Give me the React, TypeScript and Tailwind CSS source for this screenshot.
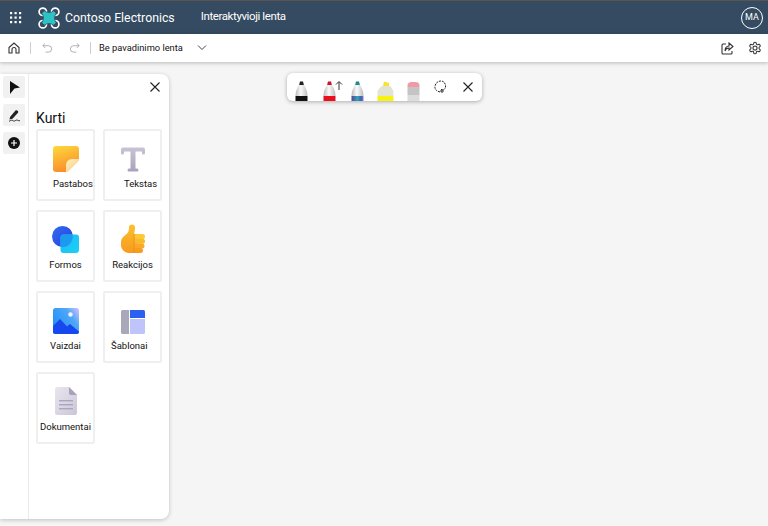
import React from "react";

const font = { fontFamily: 'Roboto, "Noto Sans", sans-serif' };

function NoteIcon() {
  return (
    <svg width="26" height="26" viewBox="0 0 26 26">
      <defs>
        <linearGradient id="n1" x1="0.2" y1="0" x2="0.5" y2="1">
          <stop offset="0" stopColor="#fed53a" />
          <stop offset="1" stopColor="#f98b2c" />
        </linearGradient>
        <linearGradient id="n2" x1="0" y1="0" x2="1" y2="1">
          <stop offset="0" stopColor="#fff0c4" />
          <stop offset="1" stopColor="#fbc978" />
        </linearGradient>
      </defs>
      <path d="M3 0h20a3 3 0 0 1 3 3v11L14 26H3a3 3 0 0 1-3-3V3a3 3 0 0 1 3-3z" fill="url(#n1)" />
      <path d="M26 13v1.500L14.500 26H13v-7a6 6 0 0 1 6-6z" fill="url(#n2)" />
    </svg>
  );
}
function TextIcon() {
  return (
    <svg width="24" height="25" viewBox="0 0 24 25">
      <defs>
        <linearGradient id="t1" x1="0" y1="0" x2="0" y2="1">
          <stop offset="0" stopColor="#c9c3d6" />
          <stop offset="1" stopColor="#a9a1bb" />
        </linearGradient>
      </defs>
      <path d="M0 6V2.500Q0 .5 2 .5h20q2 0 2 2V6q0 1.500-1.500 1.500T21 6V4.500h-6.500V21.500H16q1.500 0 1.500 1.500T16 24.500H8q-1.500 0-1.500-1.500T8 21.500h1.500V4.500H3V6q0 1.500-1.500 1.500T0 6z" fill="url(#t1)" />
    </svg>
  );
}
function ShapesIcon() {
  return (
    <svg width="27" height="27" viewBox="0 0 27 27">
      <defs>
        <linearGradient id="s1" x1="0" y1="0" x2="1" y2="1">
          <stop offset="0" stopColor="#2f6bf0" />
          <stop offset="1" stopColor="#2a3fe0" />
        </linearGradient>
        <linearGradient id="s2" x1="0" y1="0" x2="1" y2="1">
          <stop offset="0" stopColor="#22b8f5" />
          <stop offset="1" stopColor="#18d2f5" />
        </linearGradient>
      </defs>
      <circle cx="10.500" cy="10.500" r="10.500" fill="url(#s1)" />
      <rect x="8.500" y="8.500" width="18.500" height="18.500" rx="3" fill="url(#s2)" />
      <path d="M8.500 11.500a3 3 0 0 1 3-3H20.500A10.500 10.500 0 0 1 11 21a10 10 0 0 1-2.500-.3z" fill="#1b9af0" />
    </svg>
  );
}
function ThumbIcon() {
  return (
    <svg width="24" height="29" viewBox="0 0 24 29">
      <defs>
        <linearGradient id="h1" x1="0" y1="0" x2="0" y2="1">
          <stop offset="0" stopColor="#fcc02e" />
          <stop offset="1" stopColor="#f79a1f" />
        </linearGradient>
      </defs>
      <path d="M0 18.500c0-4 2.500-6 5-8 2.500-2 3-3.500 3-7.500 0-3.500 6-3.500 6 0 0 3-.5 5-1 7h3v19H8c-4.500 0-8-4-8-8z" fill="url(#h1)" />
      <rect x="13" y="10" width="11" height="5" rx="2.500" fill="#fdc834" />
      <rect x="13" y="14.700" width="11" height="5" rx="2.500" fill="#fbb92c" />
      <rect x="13" y="19.400" width="10.500" height="5" rx="2.500" fill="#f9a926" />
      <rect x="13" y="24" width="9" height="5" rx="2.500" fill="#f89c20" />
      <path d="M13 10v19" stroke="#ee8a1a" strokeWidth=".8" />
    </svg>
  );
}
function ImageIcon() {
  return (
    <svg width="26" height="26" viewBox="0 0 26 26">
      <defs>
        <linearGradient id="i1" x1="0" y1="0.700" x2="1" y2="0">
          <stop offset="0" stopColor="#1f8ff5" />
          <stop offset="0.650" stopColor="#4fa8f8" />
          <stop offset="1" stopColor="#d8c2fb" />
        </linearGradient>
      </defs>
      <rect width="26" height="26" rx="2.500" fill="url(#i1)" />
      <circle cx="17.500" cy="6.500" r="2.200" fill="#f4f1ff" />
      <path d="M0 18l7-7 7 7.500 3-2.500 9 7.500V23.500A2.500 2.500 0 0 1 23.500 26h-21A2.500 2.500 0 0 1 0 23.500z" fill="#1747ef" />
    </svg>
  );
}
function TemplateIcon() {
  return (
    <svg width="24" height="24" viewBox="0 0 24 24">
      <path d="M1.500 0H8v24H1.500A1.500 1.500 0 0 1 0 22.500v-21A1.500 1.500 0 0 1 1.500 0z" fill="#a9a8bb" />
      <path d="M9 0h13.500A1.500 1.500 0 0 1 24 1.500V8H9z" fill="#2d5ff0" />
      <path d="M9 9h15v13.500a1.500 1.500 0 0 1-1.500 1.500H9z" fill="#bfc5fb" />
    </svg>
  );
}
function DocIcon() {
  return (
    <svg width="22" height="28" viewBox="0 0 22 28">
      <defs>
        <linearGradient id="d1" x1="0" y1="0" x2="1" y2="1">
          <stop offset="0" stopColor="#e9e6ee" />
          <stop offset="1" stopColor="#cbc6d8" />
        </linearGradient>
      </defs>
      <path d="M2 0h12l8 8v18a2 2 0 0 1-2 2H2a2 2 0 0 1-2-2V2a2 2 0 0 1 2-2z" fill="url(#d1)" />
      <path d="M14 0l8 8h-6a2 2 0 0 1-2-2z" fill="#a5a2ba" />
      <rect x="4" y="13" width="14" height="1.400" fill="#a9a7bd" />
      <rect x="4" y="17" width="14" height="1.400" fill="#a9a7bd" />
      <rect x="4" y="21" width="14" height="1.400" fill="#a9a7bd" />
    </svg>
  );
}

function Card({ label, icon, labelClass }: { label: string; icon: React.ReactNode; labelClass?: string }) {
  return (
    <div className="relative flex h-[72px] w-[59px] flex-col items-center rounded-[2px] border-2 border-[#efefef] bg-white">
      <div className="flex h-[41px] w-full items-end justify-center">{icon}</div>
      <div className={"absolute top-[45px] whitespace-nowrap text-[9.500px] leading-[16px] text-[#111] " + (labelClass ?? "")}>{label}</div>
    </div>
  );
}

function Marker({ tip, body, band, id, className }: { tip: string; body: string; band: React.ReactNode; id: string; className?: string }) {
  return (
    <svg width="13" height="20" viewBox="0 0 13 20" className={className}>
      <defs>
        <linearGradient id={id} x1="0" y1="0" x2="1" y2="0">
          <stop offset="0" stopColor="#bdbdbd" />
          <stop offset="0.450" stopColor="#fafafa" />
          <stop offset="1" stopColor={body} />
        </linearGradient>
      </defs>
      <path d="M5 .5h3L9.500 5C11.500 8 12.500 11 12.500 15H.5C.5 11 1.500 8 3.500 5z" fill={`url(#${id})`} />
      <path d="M5 .5h3L8.800 4H4.200z" fill={tip} />
      {band}
    </svg>
  );
}

function PenButton({ icon }: { icon: React.ReactNode }) {
  return <div className="flex h-[20px] items-end">{icon}</div>;
}

export default function App() {
  return (
    <div className="flex h-[526px] w-[768px] flex-col overflow-hidden bg-[#f5f5f5]" style={font}>
      <header className="flex h-[34px] items-center border-t border-[#5b5450] bg-[#344b61] text-white">
        <svg width="12" height="12" viewBox="0 0 12 12" fill="#fff" className="ml-[10px]">
          {[0, 4.500, 9].map((y) =>
            [0, 4.500, 9].map((x) => <rect key={`${x}-${y}`} x={x} y={y} width="2.200" height="2.200" />)
          )}
        </svg>
        <svg width="22" height="22" viewBox="0 0 22 22" className="ml-[16px]">
          <g fill="none" stroke="#fff" strokeWidth="1.700">
            <circle cx="4.800" cy="4.800" r="3.700" />
            <circle cx="17.200" cy="4.800" r="3.700" />
            <circle cx="4.800" cy="17.200" r="3.700" />
            <circle cx="17.200" cy="17.200" r="3.700" />
          </g>
          <path d="M3.800 6.200L6.200 3.800Q11 7 15.800 3.800L18.200 6.200Q15 11 18.200 15.800L15.800 18.200Q11 15 6.200 18.200L3.800 15.800Q7 11 3.800 6.200z" fill="#2cc2c6" stroke="#344b61" strokeWidth=".8" />
        </svg>
        <span className="ml-[5px] text-[12.300px] leading-[20px]">Contoso Electronics</span>
        <span className="ml-[26px] -mt-[1px] text-[11.500px] tracking-[-0.4px]">Interaktyvioji lenta</span>
        <div className="ml-auto mr-[5px] flex h-[22px] w-[22px] items-center justify-center rounded-full border border-white text-[9px]">MA</div>
      </header>

      <div className="relative z-10 flex h-[28px] items-center bg-white shadow-[0_1px_4px_rgba(0,0,0,0.25)]">
        <svg width="12" height="12" viewBox="0 0 12 12" fill="none" stroke="#333" strokeWidth="1.100" className="ml-[8px]">
          <path d="M1 5.500L6 1l5 4.500V11H8V7.500a2 2 0 0 0-4 0V11H1z" />
        </svg>
        <div className="ml-[10px] h-[12px] w-px bg-[#ccc]" />
        <svg width="11" height="12" viewBox="0 0 12 12" fill="none" stroke="#aaa" strokeWidth="1" className="ml-[11px]">
          <path d="M3 1L1 3.500 3.500 6M1 3.500h6a3.500 3.500 0 0 1 0 7H4" />
        </svg>
        <svg width="11" height="12" viewBox="0 0 12 12" fill="none" stroke="#aaa" strokeWidth="1" className="ml-[16px]">
          <path d="M9 1l2 2.500L8.500 6M11 3.500H5a3.500 3.500 0 0 0 0 7h3" />
        </svg>
        <div className="ml-[10px] h-[12px] w-px bg-[#ccc]" />
        <span className="ml-[8px] text-[9.300px] text-[#111]">Be pavadinimo lenta</span>
        <svg width="10" height="6" viewBox="0 0 10 6" fill="none" stroke="#444" strokeWidth="1" className="ml-[14px]">
          <path d="M1 .5l4 4 4-4" />
        </svg>
        <svg width="13" height="13" viewBox="0 0 13 13" fill="none" stroke="#333" strokeWidth="1.100" className="ml-auto">
          <path d="M5 2H2a1 1 0 0 0-1 1v8a1 1 0 0 0 1 1h8a1 1 0 0 0 1-1V9" />
          <path d="M8 1l4 3.500L8 8V6C6 6 4.500 7 4 9c0-3 1.500-5 4-5z" />
        </svg>
        <svg width="14" height="14" viewBox="0 0 24 24" fill="none" stroke="#333" strokeWidth="1.800" className="ml-[14px] mr-[6px]">
          <circle cx="12" cy="12" r="3.500" />
          <path d="M12.220 2h-.44a2 2 0 0 0-2 2v.18a2 2 0 0 1-1 1.730l-.43.25a2 2 0 0 1-2 0l-.15-.08a2 2 0 0 0-2.730.730l-.22.380a2 2 0 0 0 .730 2.730l.15.100a2 2 0 0 1 1 1.720v.510a2 2 0 0 1-1 1.740l-.15.090a2 2 0 0 0-.730 2.730l.22.380a2 2 0 0 0 2.730.730l.15-.08a2 2 0 0 1 2 0l.43.250a2 2 0 0 1 1 1.730V20a2 2 0 0 0 2 2h.44a2 2 0 0 0 2-2v-.18a2 2 0 0 1 1-1.730l.43-.25a2 2 0 0 1 2 0l.15.080a2 2 0 0 0 2.730-.730l.22-.390a2 2 0 0 0-.730-2.730l-.15-.080a2 2 0 0 1-1-1.740v-.500a2 2 0 0 1 1-1.740l.15-.090a2 2 0 0 0 .730-2.730l-.22-.380a2 2 0 0 0-2.730-.730l-.15.080a2 2 0 0 1-2 0l-.43-.250a2 2 0 0 1-1-1.730V4a2 2 0 0 0-2-2z" />
        </svg>
      </div>

      <div className="relative flex flex-1 items-start">
        <div className="mt-[12px] flex h-[445px] w-[169px] rounded-r-[8px] bg-white shadow-[0_1px_4px_rgba(0,0,0,0.22)]">
          <aside className="flex w-[28px] shrink-0 flex-col items-center gap-[6px] pt-[2px]">
            <button className="flex h-[22px] w-[22px] items-center justify-center rounded-[2px] bg-[#f1f1f1]">
              <svg width="11" height="13" viewBox="0 0 11 13"><path d="M1 0l10 6.500-5.500 1L1 13z" fill="#111" /></svg>
            </button>
            <button className="flex h-[22px] w-[22px] items-center justify-center rounded-[2px] bg-[#f1f1f1]">
              <svg width="13" height="13" viewBox="0 0 13 13" fill="none">
                <path d="M2 8L7.500 1.500c1.200-1.200 3.500.8 2.500 2.200L4.500 9.800 1.500 10.500z" fill="#222" />
                <path d="M1 12.300c2-1 3-1.500 4-.6s2 0 3-.5 2 .5 4 .6" stroke="#222" strokeWidth=".9" />
              </svg>
            </button>
            <button className="flex h-[22px] w-[22px] items-center justify-center rounded-[2px] bg-[#f1f1f1]">
              <svg width="12" height="12" viewBox="0 0 12 12">
                <circle cx="6" cy="6" r="6" fill="#111" />
                <path d="M6 3v6M3 6h6" stroke="#fff" strokeWidth="1.200" />
              </svg>
            </button>
          </aside>
          <div className="flex-1 border-l border-[#ebebeb] pl-[7px]">
            <div className="flex h-[26px] items-center justify-end pr-[9px]">
              <svg width="10" height="10" viewBox="0 0 10 10" stroke="#222" strokeWidth="1.100"><path d="M.5.500l9 9M9.500.500l-9 9" /></svg>
            </div>
            <div className="mt-[8px] h-[21px] text-[14px] leading-[20px] text-[#111]">Kurti</div>
            <div className="grid grid-cols-[59px_59px] gap-x-[8px] gap-y-[9px]">
              <Card label="Pastabos" icon={<NoteIcon />} labelClass="left-[15px]" />
              <Card label="Tekstas" icon={<TextIcon />} labelClass="left-[19px]" />
              <Card label="Formos" icon={<ShapesIcon />} />
              <Card label="Reakcijos" icon={<ThumbIcon />} />
              <Card label="Vaizdai" icon={<ImageIcon />} />
              <Card label="Šablonai" icon={<TemplateIcon />} labelClass="left-[6px]" />
              <Card label="Dokumentai" icon={<DocIcon />} />
            </div>
          </div>
        </div>

        <div className="absolute left-[287px] top-[11px] flex h-[28px] w-[195px] items-end rounded-[6px] bg-white pl-[8px] shadow-[0_1px_4px_rgba(0,0,0,0.3)]">
          <PenButton icon={<Marker id="m1" tip="#222" body="#bdbdbd" band={<rect x=".5" y="15" width="12" height="5" fill="#111" />} />} />
          <div className="relative ml-[15px] flex">
            <PenButton icon={<Marker id="m2" tip="#d0112b" body="#bdbdbd" band={<rect x=".5" y="15" width="12" height="5" fill="#e8101f" />} />} />
            <svg width="8" height="9" viewBox="0 0 8 9" fill="none" stroke="#333" className="absolute left-[12px] top-[0px]"><path d="M4 9V1M1 3.500L4 .5l3 3" /></svg>
          </div>
          <div className="ml-[15px]">
            <PenButton
              icon={
                <Marker
                  id="m3"
                  tip="#1f8a8a"
                  body="#bdbdbd"
                  band={
                    <>
                      <defs>
                        <linearGradient id="m3b" x1="0" y1="0" x2="1" y2="0">
                          <stop offset="0" stopColor="#5a3fa8" />
                          <stop offset="0.500" stopColor="#2fa8a8" />
                          <stop offset="0.800" stopColor="#3a5fc0" />
                          <stop offset="1" stopColor="#8a7fd0" />
                        </linearGradient>
                      </defs>
                      <rect x=".5" y="15" width="12" height="5" fill="url(#m3b)" />
                    </>
                  }
                />
              }
            />
          </div>
          <svg width="17" height="20" viewBox="0 0 17 20" className="ml-[13px]">
            <path d="M7 .5l5 1.500v3H6z" fill="#f5e330" />
            <path d="M5 5h8c2 2 3.500 4 3.500 7v3H.5v-4c0-2 2-4 4.500-6z" fill="#e3e3d4" />
            <rect x=".5" y="15" width="16" height="5" fill="#f7f20f" />
          </svg>
          <svg width="13" height="20" viewBox="0 0 13 20" className="ml-[13px]">
            <path d="M.5 5q0-4 4-4h4q4 0 4 4v1H.5z" fill="#f19aa6" />
            <rect x=".5" y="6" width="12" height="8" fill="#c4c4c4" />
            <rect x=".5" y="14" width="12" height="6" fill="#dcdcdc" />
          </svg>
          <svg width="13" height="13" viewBox="0 0 13 13" fill="none" stroke="#222" strokeWidth="1" className="ml-[14px] mb-[8px]">
            <path d="M6 12C2 11 .5 9 1 6s3-5 6-5 5 3 4.500 6-3 3-4.500 2.500" strokeDasharray="2 1" />
            <circle cx="8" cy="11" r="1.200" />
          </svg>
          <svg width="10" height="10" viewBox="0 0 10 10" stroke="#222" strokeWidth="1.100" className="ml-[16px] mb-[9px]"><path d="M.5.500l9 9M9.500.500l-9 9" /></svg>
        </div>
      </div>
    </div>
  );
}
